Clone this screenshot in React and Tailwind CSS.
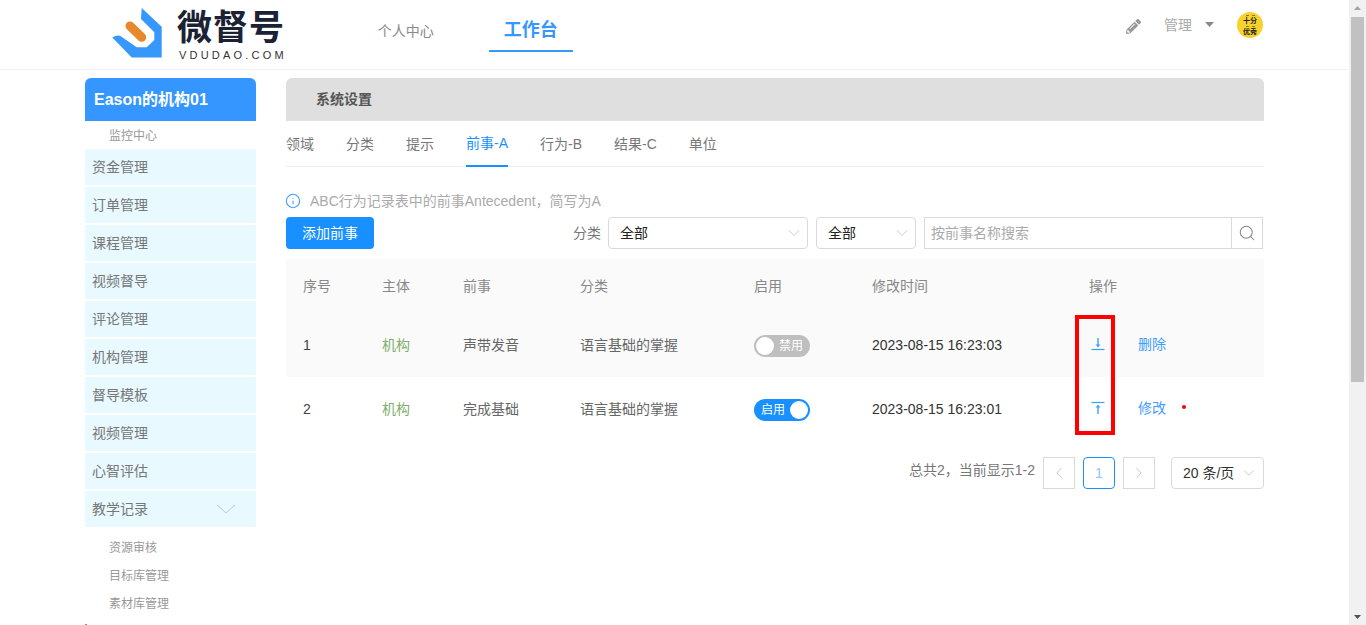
import React from 'react';
import { ChevronDown, ChevronLeft, ChevronRight, Info, Search } from 'lucide-react';
import { FaPencilAlt } from 'react-icons/fa';

const menuItems = ['资金管理', '订单管理', '课程管理', '视频督导', '评论管理', '机构管理', '督导模板', '视频管理', '心智评估'];
const subItems = ['资源审核', '目标库管理', '素材库管理'];
const tabs = ['领域', '分类', '提示', '前事-A', '行为-B', '结果-C', '单位'];

const rows = [
  { id: 1, name: '声带发音', on: false, time: '2023-08-15 16:23:03', action: '删除', bg: 'bg-[#fafafa]' },
  { id: 2, name: '完成基础', on: true, time: '2023-08-15 16:23:01', action: '修改', bg: 'bg-white' },
];

const Logo = () => (
  <svg width="51" height="51" viewBox="112 8 51 51" className="mb-1 shrink-0">
    <path
      d="M141.7 9 L161.7 27.7 V58.5 H131.7 L112.3 38.5 Q116 36 120 36.7 L136.7 48.3 H146.7 L154.3 41 V33.3 L141 20 Z"
      fill="#3798fb"
      strokeLinejoin="round"
    />
    <path d="M130 27 L141.7 38.3" stroke="#e8872b" strokeWidth="9" strokeLinecap="round" />
  </svg>
);

const PinIcon = ({ down }) => (
  <svg width="14" height="14" viewBox="0 0 14 14" className={down ? '' : 'rotate-180'}>
    <path d="M0.5 12.5H13.5" stroke="#3f9dfd" strokeWidth="1.2" />
    <path d="M7 1V9" stroke="#3f9dfd" strokeWidth="1.4" />
    <path d="M4.6 7.4H9.4L7 10.4Z" fill="#3f9dfd" />
  </svg>
);

const Select = ({ width }) => (
  <div className={`flex h-8 items-center justify-between rounded border border-[#d9d9d9] bg-white pl-[11px] pr-[3px] text-sm text-[#222] ${width}`}>
    全部
    <ChevronDown size={20} strokeWidth={0.9} className="text-[#bbb]" />
  </div>
);

const Toggle = ({ on }) =>
  on ? (
    <div className="flex h-[22px] w-14 items-center justify-between rounded-full bg-[#1890ff] pl-[7px] pr-[2px] text-xs text-white">
      启用
      <span className="h-[18px] w-[18px] rounded-full bg-white" />
    </div>
  ) : (
    <div className="flex h-[22px] w-14 items-center justify-between rounded-full bg-[#bfbfbf] pl-[2px] pr-[7px] text-xs text-white">
      <span className="h-[18px] w-[18px] rounded-full bg-white" />
      禁用
    </div>
  );

// the tiny unreadable marks on the badge
const BadgeMarks = () => (
  <span className="flex h-[3px] items-center gap-[3px]">
    <span className="h-px w-[3px] bg-[#8a7420]" />
    <span className="h-px w-[3px] bg-[#8a7420]" />
  </span>
);

const gridCols = 'grid grid-cols-[79px_81px_117px_174px_118px_217px_1fr] pl-[17px] items-center text-sm';

const App = () => {
  return (
    <div
      className="flex h-[625px] overflow-hidden bg-white text-[#666]"
      style={{ fontFamily: '"Liberation Sans", "Noto Sans CJK SC", sans-serif' }}
    >
      <div className="min-w-0 flex-1">
        {/* Header */}
        <header className="flex h-[70px] items-center border-b border-[#f2f2f2] pl-[112px] pr-[86px]">
          <Logo />
          <div className="ml-[14px] flex flex-col">
            <span className="text-[35px] font-bold leading-[38px] tracking-[1px] text-[#1a2233]">微督号</span>
            <span className="mt-[2px] pl-[2px] text-[11px] leading-3 tracking-[3.2px] text-[#333]">VDUDAO.COM</span>
          </div>
          <nav className="mb-[6px] ml-[91px] flex items-center">
            <a className="mb-[2px] text-sm text-[#888]">个人中心</a>
            <a className="ml-[55px] flex h-[40px] w-[84px] items-center justify-center border-b-2 border-[#3798fb] pb-px text-lg font-bold text-[#3798fb]">
              工作台
            </a>
          </nav>
          <div className="mb-[20px] ml-auto flex items-center">
            <FaPencilAlt size={15} className="mt-[3px] text-[#999]" />
            <span className="ml-[23px] text-sm text-[#aaa]">管理</span>
            <svg width="9" height="5" viewBox="0 0 9 5" className="ml-[13px]">
              <path d="M0 0H9L4.5 5Z" fill="#888" />
            </svg>
            <div className="ml-[23px] flex h-[26px] w-[26px] flex-col items-center justify-center rounded-full bg-[#f7d22d] text-[7px] font-bold leading-[8px] text-[#222]">
              <BadgeMarks />
              <span>十分</span>
              <BadgeMarks />
              <span>优秀</span>
            </div>
          </div>
        </header>

        <div className="flex gap-[30px] pl-[85px] pr-[85px] pt-2">
          {/* Sidebar */}
          <aside className="w-[171px] shrink-0">
            <div className="flex h-[43px] items-center rounded-t-md bg-[#3696ff] pl-[9px] text-base font-bold text-white">
              Eason的机构01
            </div>
            <div className="flex h-7 items-center pl-6 pt-px text-xs text-[#999]">监控中心</div>
            <div className="flex flex-col gap-[2px]">
              {menuItems.map((item) => (
                <div key={item} className="flex h-9 items-center bg-[#e8f9ff] pl-[7px] text-sm text-[#777]">
                  {item}
                </div>
              ))}
              <div className="flex h-9 items-center justify-between bg-[#e8f9ff] pl-[7px] pr-5 text-sm text-[#777]">
                教学记录
                <svg width="20" height="10" viewBox="0 0 20 10">
                  <path d="M1 1L10 9L19 1" fill="none" stroke="#c4c8cc" />
                </svg>
              </div>
            </div>
            <div className="pt-[6px]">
              {subItems.map((item) => (
                <div key={item} className="flex h-7 items-center pl-6 pt-px text-xs text-[#999]">
                  {item}
                </div>
              ))}
            </div>
            <div className="mt-[7px] h-px w-[2px] bg-[#ef7d1a]" />
          </aside>

          {/* Main panel */}
          <main className="relative min-w-0 flex-1">
            <div className="flex h-[43px] items-center rounded-t-md bg-[#dfdfdf] pb-px pl-[30px] text-sm font-bold text-[#555]">
              系统设置
            </div>

            <div className="flex h-[46px] gap-8 border-b border-[#eee] text-sm">
              {tabs.map((tab) => (
                <div
                  key={tab}
                  className={
                    tab === '前事-A'
                      ? 'flex h-[46px] items-center border-b-2 border-[#1890ff] text-[#1890ff]'
                      : 'flex h-[46px] items-center text-[#777]'
                  }
                >
                  {tab}
                </div>
              ))}
            </div>

            <div className="mt-[26px] flex h-4 items-center gap-[9px] text-sm text-[#aaa]">
              <Info size={16} strokeWidth={1.6} className="-ml-px text-[#3f9dfd]" />
              ABC行为记录表中的前事Antecedent，简写为A
            </div>

            <div className="mt-2 flex h-8 items-center">
              <button className="h-8 w-[88px] rounded bg-[#1890ff] text-sm text-white">添加前事</button>
              <span className="ml-auto text-sm text-[#777]">分类</span>
              <div className="ml-[7px]">
                <Select width="w-[200px]" />
              </div>
              <div className="ml-2">
                <Select width="w-[100px]" />
              </div>
              <div className="ml-2 mr-px flex h-8 w-[339px] items-center border border-[#d9d9d9] text-sm text-[#aaa]">
                <span className="flex-1 pl-[6px]">按前事名称搜索</span>
                <span className="flex h-full w-[31px] items-center justify-center border-l border-[#d9d9d9]">
                  <Search size={18} strokeWidth={1.4} className="text-[#888]" />
                </span>
              </div>
            </div>

            {/* Table */}
            <div className="mt-[10px]">
              <div className={`${gridCols} h-[54px] bg-[#fafafa] text-[#888]`}>
                <span>序号</span>
                <span>主体</span>
                <span>前事</span>
                <span>分类</span>
                <span>启用</span>
                <span>修改时间</span>
                <span>操作</span>
              </div>
              {rows.map((row) => (
                <div key={row.id} className={`${gridCols} h-16 pt-[2px] ${row.bg} text-[#666]`}>
                  <span className="mb-[2px] text-[#444]">{row.id}</span>
                  <span className="mb-[2px] text-[#7fae6d]">机构</span>
                  <span className="mb-[2px]">{row.name}</span>
                  <span className="mb-[2px]">语言基础的掌握</span>
                  <Toggle on={row.on} />
                  <span className="mb-[2px] text-[#333]">{row.time}</span>
                  <div className="mb-1 flex items-center pl-[2px]">
                    <PinIcon down={!row.on} />
                    <span className="ml-[33px] text-[#3f9dfd]">{row.action}</span>
                    {row.on && <span className="mb-[2px] ml-4 h-1 w-1 rounded-full bg-[#f00]" />}
                  </div>
                </div>
              ))}
            </div>

            {/* Pagination */}
            <div className="mt-4 flex items-center justify-end">
              <span className="mb-[6px] text-sm text-[#777]">总共2，当前显示1-2</span>
              <span className="ml-2 flex h-8 w-8 items-center justify-center border border-[#d9d9d9] text-[#bbb]">
                <ChevronLeft size={18} strokeWidth={1.1} />
              </span>
              <span className="ml-2 flex h-8 w-8 items-center justify-center rounded-sm border border-[#1890ff] text-sm text-[#8cc4fb]">
                1
              </span>
              <span className="ml-2 flex h-8 w-8 items-center justify-center border border-[#d9d9d9] text-[#bbb]">
                <ChevronRight size={18} strokeWidth={1.1} />
              </span>
              <span className="ml-4 flex h-8 w-[93px] items-center justify-between rounded border border-[#d9d9d9] pl-[11px] pr-[5px] text-sm text-[#333]">
                20 条/页
                <ChevronDown size={18} strokeWidth={1} className="text-[#bbb]" />
              </span>
            </div>

            {/* red annotation box */}
            <div className="absolute left-[789px] top-[237px] h-[120px] w-10 border-4 border-[#f00]" />
          </main>
        </div>
      </div>

      {/* Scrollbar */}
      <div className="flex w-[17px] shrink-0 flex-col items-center bg-[#f1f1f1]">
        <svg width="9" height="17" viewBox="0 0 9 17" className="shrink-0">
          <path d="M1 10L4.5 6L8 10Z" fill="#a3a3a3" />
        </svg>
        <div className="h-[365px] w-[13px] shrink-0 bg-[#c1c1c1]" />
        <svg width="9" height="17" viewBox="0 0 9 17" className="mt-auto shrink-0">
          <path d="M1 7L4.5 11L8 7Z" fill="#505050" />
        </svg>
      </div>
    </div>
  );
};

export default App;
